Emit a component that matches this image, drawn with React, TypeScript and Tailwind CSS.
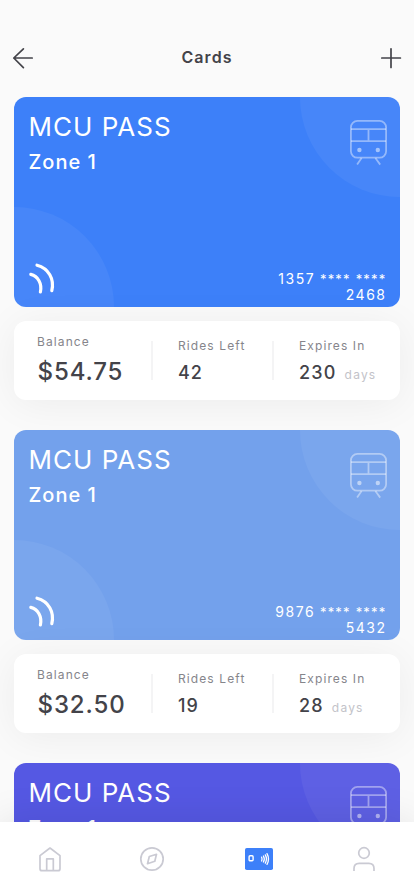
type Pass = {
  id: string
  number?: string
  tail?: string
  balance?: string
  rides?: string
  days?: string
  color: string
}

const passes: Pass[] = [
  { id: 'blue', number: '1357', tail: '2468', balance: '$54.75', rides: '42', days: '230', color: 'bg-[#3d80f9]' },
  { id: 'sky', number: '9876', tail: '5432', balance: '$32.50', rides: '19', days: '28', color: 'bg-[#73a1ec]' },
  { id: 'violet', color: 'bg-[#5558e3]' },
]

function TrainIcon() {
  return (
    <svg className="absolute right-[12px] top-[22px]" width="39" height="47" viewBox="0 0 39 47" fill="none" stroke="white" strokeOpacity="0.42" strokeWidth="1.8">
      <rect x="1.9" y="1.9" width="35.2" height="36.8" rx="6.5" />
      <path d="M2 10.2h35M2 22.2h35M19.5 10.2v12M12.6 39l-4.5 6.6M26.4 39l4.8 6.6" />
      <circle cx="10.4" cy="31" r="2.2" fill="white" fillOpacity="0.5" stroke="none" />
      <circle cx="28.8" cy="31" r="2.2" fill="white" fillOpacity="0.5" stroke="none" />
    </svg>
  )
}

function WavesIcon() {
  return (
    <svg width="28" height="32" viewBox="0 0 28 32" fill="none" stroke="white" strokeWidth="3.2" strokeLinecap="round">
      <path d="M9 3.2C20.6 6.2 26.6 17 23.8 28.6" />
      <path d="M2.8 12.4C10 14.2 14.2 21.5 12.4 30" />
    </svg>
  )
}

function PassCard({ pass }: { pass: Pass }) {
  return (
    <section className="mb-[30px]">
      <div className={`relative h-[210px] overflow-hidden rounded-xl text-white ${pass.color}`}>
        <div className="absolute -right-[100px] -top-[100px] size-[200px] rounded-full bg-white/5" />
        <div className="absolute -bottom-[100px] -left-[100px] size-[200px] rounded-full bg-white/5" />
        <TrainIcon />
        <div className="relative flex h-full flex-col justify-between">
          <div className="pl-[14.5px] pt-[14px]">
            <h2 className="text-[26px] leading-[32px] tracking-[1px]">MCU PASS</h2>
            <p className="mt-[7px] text-[20px] font-medium leading-[24px] tracking-[1px]">Zone 1</p>
          </div>
          <div className="flex items-end justify-between pl-[14px] pr-[13.5px]">
            <div className="pb-[13px]"><WavesIcon /></div>
            {pass.number && (
              <p className="pb-[4px] text-right text-[14px] leading-[16px] tracking-[1.5px]">
                {pass.number}<span className="text-[13px] tracking-[1.2px]"> **** ****</span><br />{pass.tail}
              </p>
            )}
          </div>
        </div>
      </div>
      {pass.balance && (
        <div className="relative mt-[14px] flex h-[79px] items-center rounded-xl bg-white text-[#434349] shadow-[0_4px_40px_rgba(0,0,0,0.06)]">
          <div className="w-[137px] pl-[23px]">
            <p className="text-[12px] leading-[14px] tracking-[1.1px] text-[#85858b]">Balance</p>
            <p className="mt-[9px] pl-[0.5px] text-[24px] font-medium leading-[28px] tracking-[0.9px]">{pass.balance}</p>
          </div>
          <div className="h-[39px] w-[2px] bg-[#f4f4f5]" />
          <div className="w-[119px] pl-[25px]">
            <p className="text-[12px] leading-[14px] tracking-[1.1px] text-[#85858b]">Rides Left</p>
            <p className="mt-[9px] text-[18px] font-medium leading-[21px] tracking-[1px]">{pass.rides}</p>
          </div>
          <div className="h-[39px] w-[2px] bg-[#f4f4f5]" />
          <div className="pl-[25px]">
            <p className="text-[12px] leading-[14px] tracking-[1.1px] text-[#85858b]">Expires In</p>
            <div className="mt-[9px] flex items-baseline gap-[8px] text-[18px] font-medium leading-[21px] tracking-[1.2px]">
              <span>{pass.days}</span>
              <span className="text-[12px] font-normal leading-[14px] text-[#c3c3c9]">days</span>
            </div>
          </div>
        </div>
      )}
    </section>
  )
}

function NavBar() {
  return (
    <nav className="relative flex h-[74px] shrink-0 items-center bg-white pl-[38px] text-[#cacad3] shadow-[0_0_40px_rgba(0,0,0,0.1)]">
      <svg width="24" height="26" viewBox="0 0 24 26" fill="none" stroke="currentColor" strokeWidth="1.7" strokeLinejoin="round">
        <path d="M2 9.7L12 2l10 7.7v13q0 2-2 2H4q-2 0-2-2z" />
        <path d="M8.7 24.5V12.8h6.6v11.7" />
      </svg>
      <svg className="ml-[77px]" width="26" height="26" viewBox="0 0 26 26" fill="none" stroke="currentColor" strokeWidth="1.7" strokeLinejoin="round">
        <circle cx="13" cy="13" r="11.2" />
        <path d="M17.5 8.3l-1.7 7-7.3 2.4 1.8-7.2z" />
      </svg>
      <svg className="ml-[80px]" width="28" height="22" viewBox="0 0 28 22" fill="none" stroke="white">
        <rect width="28" height="22" rx="1.8" fill="#3d80f9" stroke="none" />
        <rect x="4.1" y="7.8" width="4" height="4.9" rx="1" strokeWidth="1.4" />
        <path d="M16.6 9.2q1 1.9 0 3.8M18.4 8q1.8 3 0 6M20.3 6.9q2.3 4.1 0 8.2M22 5.6q3 5.4 0 10.8" strokeWidth="1.3" strokeLinecap="round" />
      </svg>
      <svg className="ml-[79px]" width="24" height="26" viewBox="0 0 24 26" fill="none" stroke="currentColor" strokeWidth="1.7">
        <circle cx="12" cy="7" r="5.3" />
        <path d="M2 25v-2.5q0-5.2 5.2-5.2h9.6q5.2 0 5.2 5.2V25" />
      </svg>
    </nav>
  )
}

export default function App() {
  return (
    <div className="flex h-[896px] w-[414px] flex-col overflow-hidden bg-[#fafafa] font-['Inter',sans-serif]">
      <header className="flex h-[97px] shrink-0 items-start justify-between px-[12px] pt-[47px] text-[#434349]">
        <svg width="22" height="22" viewBox="0 0 22 22" fill="none" stroke="currentColor" strokeWidth="1.7" strokeLinecap="round" strokeLinejoin="round">
          <path d="M11.4 1.8L1.8 11l9.6 9.6M1.8 11h18.4" />
        </svg>
        <h1 className="text-[16px] font-semibold leading-[21px] tracking-[1.1px]">Cards</h1>
        <svg width="22" height="22" viewBox="0 0 22 22" fill="none" stroke="currentColor" strokeWidth="1.7" strokeLinecap="round">
          <path d="M11 1.8v18.6M1.8 11h18.6" />
        </svg>
      </header>
      <main className="min-h-0 flex-1 px-[14px]">
        {passes.map((pass) => <PassCard key={pass.id} pass={pass} />)}
      </main>
      <NavBar />
    </div>
  )
}
